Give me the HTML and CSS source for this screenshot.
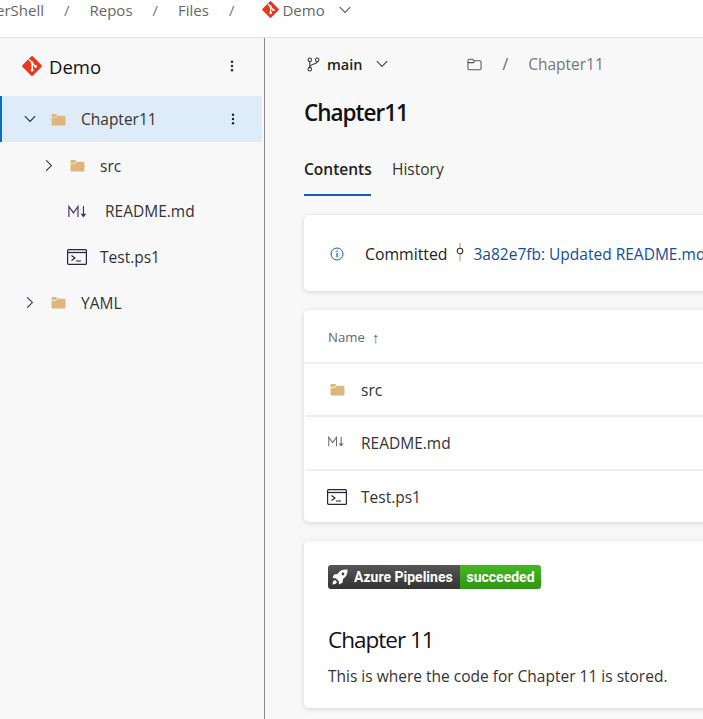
FILE: index.html
```html
<!DOCTYPE html>
<html lang="en">
<head>
<meta charset="utf-8">
<title>Demo - Repos</title>
<link rel="stylesheet" href="styles.css">
</head>
<body>
<svg class="defs" width="0" height="0">
  <defs>
    <symbol id="git" viewBox="0 0 20 20">
      <path fill="#e8391d" d="M9 .6a1.4 1.4 0 0 1 2 0l8.400 8.400a1.400 1.400 0 0 1 0 2L11 19.400a1.400 1.400 0 0 1-2 0L.6 11a1.400 1.400 0 0 1 0-2z"/>
      <path fill="none" stroke="#fff" stroke-width="1.500" d="M7 3.500 10.200 6.700V14M10.200 7.200 13.500 10.500"/>
      <circle cx="10.200" cy="14" r="1.500" fill="#fff"/><circle cx="13.500" cy="10.500" r="1.400" fill="#fff"/><circle cx="10.200" cy="6.700" r="1.300" fill="#fff"/>
    </symbol>
    <symbol id="folder" viewBox="0 0 16 14">
      <path fill="#dcb67a" d="M1.500 1h4l1.500 1.500-3 2H.5V2a1 1 0 0 1 1-1zM7.800 3H14a1.500 1.500 0 0 1 1.500 1.500V12a1.500 1.500 0 0 1-1.500 1.500H2A1.500 1.500 0 0 1 .5 12V5.500h3.500z"/>
    </symbol>
    <symbol id="term" viewBox="0 0 20 16">
      <rect x=".6" y=".6" width="18.800" height="14.800" rx="1" fill="none" stroke="#2b2440" stroke-width="1.200"/>
      <path d="M.6 3.500h18.800" stroke="#2b2440" stroke-width="1.300"/>
      <path d="M4.500 6.500 8 9 4.500 11.500M9 12h5" fill="none" stroke="#222" stroke-width="1.100"/>
    </symbol>
    <symbol id="md" viewBox="0 0 22 14">
      <path d="M1 13V1.500l5 7 5-7V13" fill="none" stroke="currentColor" stroke-width="1.300"/>
      <path d="M17 1v10" stroke="currentColor" stroke-width="1.300"/><path d="M13.800 9.500h6.400L17 13.500z" fill="currentColor"/>
    </symbol>
    <symbol id="chev-r" viewBox="0 0 10 16"><path d="M1.500 1.500 8 8l-6.500 6.500" fill="none" stroke="#222244" stroke-width="1.300"/></symbol>
    <symbol id="chev-d" viewBox="0 0 16 10"><path d="M1.500 1.500 8 8l6.500-6.500" fill="none" stroke="currentColor" stroke-width="1.300"/></symbol>
    <symbol id="dots" viewBox="0 0 4 14"><circle cx="2" cy="2" r="1.400"/><circle cx="2" cy="7" r="1.400"/><circle cx="2" cy="12" r="1.400"/></symbol>
  </defs>
</svg>

<header class="topbar">
  <span class="crumb crumb-first">erShell</span><span class="sep">/</span>
  <span class="crumb">Repos</span><span class="sep">/</span>
  <span class="crumb">Files</span><span class="sep">/</span>
  <svg class="ico-git-sm"><use href="#git"/></svg>
  <span class="crumb crumb-demo">Demo</span>
  <svg class="ico-chev-top"><use href="#chev-d"/></svg>
</header>

<div class="layout">
  <aside class="sidebar">
    <div class="repo-head">
      <svg class="ico-git"><use href="#git"/></svg>
      <span class="repo-name">Demo</span>
      <svg class="ico-dots"><use href="#dots"/></svg>
    </div>
    <div class="tree">
      <div class="node node-selected l0">
        <svg class="ico-chev-down"><use href="#chev-d"/></svg>
        <svg class="ico-folder"><use href="#folder"/></svg>
        <span class="node-label">Chapter11</span>
        <svg class="ico-dots"><use href="#dots"/></svg>
      </div>
      <div class="node l1 after-selected">
        <svg class="ico-chev"><use href="#chev-r"/></svg>
        <svg class="ico-folder"><use href="#folder"/></svg>
        <span class="node-label">src</span>
      </div>
      <div class="node l1 file">
        <svg class="ico-md"><use href="#md"/></svg>
        <span class="node-label">README.md</span>
      </div>
      <div class="node l1 file">
        <svg class="ico-term"><use href="#term"/></svg>
        <span class="node-label">Test.ps1</span>
      </div>
      <div class="node l0">
        <svg class="ico-chev"><use href="#chev-r"/></svg>
        <svg class="ico-folder"><use href="#folder"/></svg>
        <span class="node-label">YAML</span>
      </div>
    </div>
  </aside>

  <main class="content">
    <div class="path-row">
      <svg class="ico-branch" viewBox="0 0 14 16"><g fill="none" stroke="#333" stroke-width="1.100"><circle cx="3" cy="3" r="1.900"/><circle cx="11" cy="3" r="1.900"/><circle cx="3" cy="13" r="1.900"/><path d="M3 5v6M11 5c0 3-8 2-8 6"/></g></svg>
      <span class="branch">main</span>
      <svg class="ico-chev-branch"><use href="#chev-d"/></svg>
      <svg class="ico-path-folder" viewBox="0 0 16 13"><path d="M1 2.500A1.500 1.500 0 0 1 2.500 1h3.500l1.500 1.500h6A1.500 1.500 0 0 1 15 4v6.500a1.500 1.500 0 0 1-1.500 1.500h-11A1.500 1.500 0 0 1 1 10.500zM1 4.500h6L8 3" fill="none" stroke="#555" stroke-width="1.100"/></svg>
      <span class="path-sep">/</span>
      <span class="path-name">Chapter11</span>
    </div>
    <h1 class="title">Chapter11</h1>
    <nav class="tabs">
      <span class="tab tab-active">Contents</span>
      <span class="tab">History</span>
    </nav>

    <section class="card commit">
      <svg class="ico-info" viewBox="0 0 14 14"><circle cx="7" cy="7" r="6" fill="none" stroke="#0f5cbd" stroke-width="1"/><path d="M7 6v4.200" stroke="#0f5cbd" stroke-width="1.200"/><circle cx="7" cy="4.200" r=".8" fill="#0f5cbd"/></svg>
      <span class="commit-text">Committed</span>
      <svg class="ico-commit" viewBox="0 0 8 18"><path d="M4 0v5.500M4 11v7" stroke="#c29a4a" stroke-width="1.100"/><circle cx="4" cy="8" r="2.800" fill="none" stroke="#333" stroke-width="1.100"/></svg>
      <span class="commit-link">3a82e7fb: Updated README.md</span>
    </section>

    <section class="card table">
      <div class="t-head"><span class="t-name">Name</span><span class="t-arrow">↑</span></div>
      <div class="t-row">
        <svg class="t-ico ico-folder"><use href="#folder"/></svg><span>src</span>
      </div>
      <div class="t-row">
        <svg class="t-ico ico-md-sm"><use href="#md"/></svg><span>README.md</span>
      </div>
      <div class="t-row t-last">
        <svg class="t-ico ico-term"><use href="#term"/></svg><span>Test.ps1</span>
      </div>
    </section>

    <section class="card readme">
      <div class="badge">
        <span class="badge-left">
          <svg class="ico-rocket" viewBox="0 0 16 16"><path fill="#fff" d="M15.500.5C11 .2 7.500 1.500 5.500 5L2 5.500.5 9l3.300.3 3 3 .2 3.200 3.500-1.700.5-3.800C14 8 15.800 5 15.500.5zM3 11c-1.500.5-2.500 2-2.500 4.500C3 15.500 4.500 14.500 5 13z"/><circle cx="11" cy="5" r="1.400" fill="#444"/></svg>
          <span>Azure Pipelines</span>
        </span>
        <span class="badge-right">succeeded</span>
      </div>
      <h2 class="readme-title">Chapter 11</h2>
      <p class="readme-text">This is where the code for Chapter 11 is stored.</p>
    </section>
  </main>
</div>
</body>
</html>
```
FILE: styles.css
```css
* { box-sizing: border-box; }
html, body { margin: 0; height: 100%; overflow: hidden; }
body {
  width: 703px;
  height: 719px;
  background: #f8f8f8;
  font-family: "Open Sans", "Noto Sans", sans-serif;
  font-size: 15.5px;
  color: #222;
}
.defs { position: absolute; }
svg { display: block; flex: none; }

.topbar {
  height: 38px;
  background: #fff;
  border-bottom: 1px solid #e2e2e2;
  display: flex;
  align-items: center;
  padding-bottom: 18px;
  font-size: 15px;
  color: #666;
  white-space: nowrap;
  overflow: hidden;
}
.crumb-first { margin-left: -4px; }
.sep { margin: 0 20px; color: #777; }
.ico-git-sm { width: 17px; height: 17px; margin: 0 3px 0 8px; }
.ico-chev-top { width: 14px; height: 8px; margin-left: 13px; color: #555; }

.layout { display: flex; height: 681px; }
.sidebar { width: 265px; flex: none; border-right: 1px solid #8a8a8a; }
.repo-head {
  height: 58px;
  display: flex;
  align-items: center;
  padding: 0 30px 2px 22px;
}
.ico-git { width: 20px; height: 20px; margin-right: 7px; }
.repo-name { font-size: 18.500px; color: #111; flex: 1; }
.ico-dots { width: 4px; height: 12px; fill: #222; }

.node { height: 45.600px; display: flex; align-items: center; }
.node-selected {
  height: 46px;
  width: 262px;
  background: #deebf8;
  border-left: 2px solid #0f6cbd;
  padding-right: 27px;
}
.after-selected { margin-top: 1px; }
.l0 { padding-left: 26px; }
.node-selected.l0 { padding-left: 21px; }
.l1 { padding-left: 45px; }
.ico-chev-down { width: 14px; height: 8px; color: #222244; margin-right: 14px; }
.ico-chev { width: 8px; height: 13px; margin-right: 17px; }
.ico-folder { width: 15px; height: 13px; margin-right: 15px; }
.node-label { flex: 1; color: #333; }
.file { padding-left: 68px; }
.ico-md { width: 20px; height: 13px; margin-right: 17px; color: #4a2f6b; }
.ico-term { width: 20px; height: 16px; margin-right: 13px; margin-left: -1px; }

.content { flex: 1; min-width: 0; padding-left: 39px; }
.path-row { height: 52px; display: flex; align-items: center; margin-left: 3px; }
.ico-branch { width: 13px; height: 15px; margin-right: 7px; }
.branch { font-weight: 600; font-size: 14.500px; color: #222; }
.ico-chev-branch { width: 14px; height: 8px; color: #444; margin-left: 12px; }
.ico-path-folder { width: 15px; height: 13px; margin-left: 78px; }
.path-sep { margin: 0 20px 0 21px; color: #666; }
.path-name { color: #777; }

.title { margin: 0; font-size: 22.500px; font-weight: 600; line-height: 32px; color: #111; padding-top: 7px; height: 47px; letter-spacing: -1px; }
.tabs { display: flex; height: 58px; gap: 21px; margin-top: 20px; align-items: flex-start; }
.tab { line-height: 24px; color: #333; }
.tab-active { font-weight: 600; color: #222; border-bottom: 2px solid #0f5cbd; height: 39px; width: 67px; white-space: nowrap; }

.card {
  background: #fff;
  width: 500px;
  border-radius: 5px;
  box-shadow: 0 1px 5px rgba(0,0,0,.16);
}
.commit { height: 76px; display: flex; align-items: center; padding: 2px 0 0 26px; white-space: nowrap; }
.ico-info { width: 14px; height: 14px; margin-right: 21px; }
.commit-text { color: #222; font-size: 15.800px; }
.ico-commit { width: 8px; height: 18px; margin: -4px 10px 0 8px; }
.commit-link { color: #0f5096; }

.table { height: 212px; margin-top: 19px; }
.t-head {
  height: 53.500px;
  display: flex;
  align-items: center;
  padding: 2px 0 0 24px;
  border-bottom: 2px solid #f0f0f0;
  font-size: 13.200px;
  color: #666;
}
.t-arrow { margin-left: 7px; font-size: 15px; color: #666; }
.t-row {
  height: 53.500px;
  margin-left: 2px;
  display: flex;
  align-items: center;
  padding: 1px 0 0 22px;
  border-bottom: 2px solid #eeeeee;
  color: #333;
}
.t-last { border-bottom: 0; padding-top: 0; }
.t-ico.ico-folder { margin: 0 16px 0 2px; }
.t-ico.ico-md-sm { width: 17px; height: 11px; margin: -4px 16px 0 0; color: #667; }
.t-ico.ico-term { margin: 0 14px 0 -1px; }

.readme { height: 167px; margin-top: 19px; padding: 24px 24px 0; }
.badge { display: inline-flex; height: 24px; border-radius: 3px; overflow: hidden; font-family: "Roboto", sans-serif; font-size: 14px; font-weight: 700; color: #fff; }
.badge-left { width: 132px; background: linear-gradient(#555, #333); display: flex; align-items: center; padding-left: 4px; gap: 6px; white-space: nowrap; }
.ico-rocket { width: 16px; height: 16px; }
.badge-right { width: 81px; background: linear-gradient(#45b820, #2f9612); display: flex; align-items: center; justify-content: center; }
.readme-title { margin: 0; font-size: 22.500px; font-weight: 400; letter-spacing: -1px; color: #111; line-height: 32px; padding-top: 34px; height: 66px; }
.readme-text { margin: 9px 0 0; color: #333; }
```
